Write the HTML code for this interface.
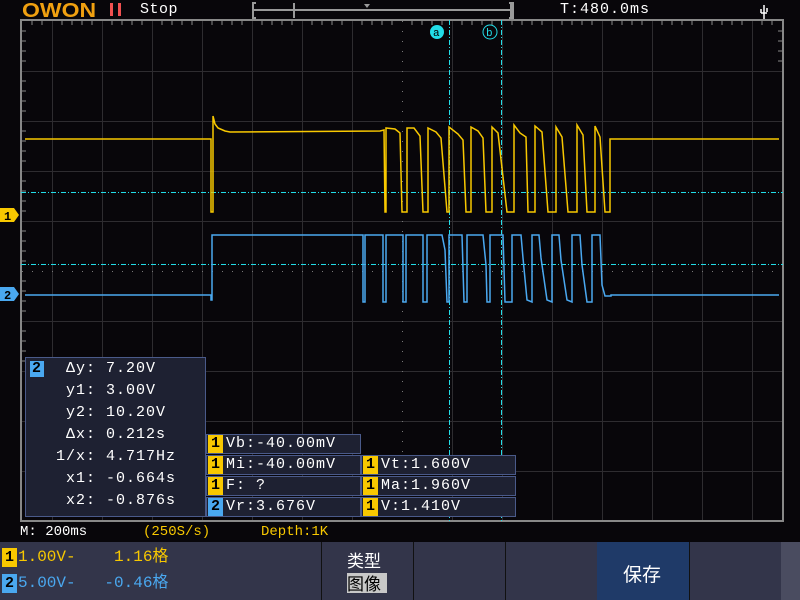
<!DOCTYPE html><html><head><meta charset="utf-8"><style>
*{margin:0;padding:0}body{width:800px;height:600px;background:#08060a;position:relative;overflow:hidden;font-family:"Liberation Mono","Noto Sans CJK SC",monospace;color:#fff}
.a{position:absolute;white-space:pre}
.b1{background:#f8c800;color:#000;display:inline-block;width:15px;text-align:center;font-weight:bold;margin-right:3px;letter-spacing:0}
.b2{background:#4aa8f0;color:#000;display:inline-block;width:15px;text-align:center;font-weight:bold;margin-right:3px;letter-spacing:0}
.mb{position:absolute;background:#1e2132;border:1px solid #4a5a8a;height:20px;font-size:15px;line-height:18px;box-sizing:border-box;padding-left:1px;letter-spacing:1px}
</style></head><body>
<svg class="a" style="left:0;top:0" width="800" height="600">
<g stroke="#2e2c30" stroke-width="1">
<path d="M52.5 20V521M102.5 20V521M152.5 20V521M202.5 20V521M252.5 20V521M302.5 20V521M352.5 20V521M452.5 20V521M502.5 20V521M552.5 20V521M602.5 20V521M652.5 20V521M702.5 20V521M752.5 20V521"/>
<path d="M21 71.5H783M21 121.5H783M21 171.5H783M21 221.5H783M21 321.5H783M21 371.5H783M21 421.5H783M21 471.5H783"/>
</g>
<g stroke="#777" stroke-width="1">
<path d="M402.5 20V521" stroke-dasharray="1,9" stroke-dashoffset="-1"/>
<path d="M21 271.5H783" stroke-dasharray="1,9" stroke-dashoffset="-1"/>
</g>
<g stroke="#888" stroke-width="2" fill="none"><rect x="21" y="20" width="762" height="501"/></g>
<g stroke="#888" stroke-width="1">
<path d="M32 20v5M42 20v5M62 20v5M72 20v5M82 20v5M92 20v5M112 20v5M122 20v5M132 20v5M142 20v5M162 20v5M172 20v5M182 20v5M192 20v5M212 20v5M222 20v5M232 20v5M242 20v5M262 20v5M272 20v5M282 20v5M292 20v5M312 20v5M322 20v5M332 20v5M342 20v5M362 20v5M372 20v5M382 20v5M392 20v5M412 20v5M422 20v5M432 20v5M442 20v5M462 20v5M472 20v5M482 20v5M492 20v5M512 20v5M522 20v5M532 20v5M542 20v5M562 20v5M572 20v5M582 20v5M592 20v5M612 20v5M622 20v5M632 20v5M642 20v5M662 20v5M672 20v5M682 20v5M692 20v5M712 20v5M722 20v5M732 20v5M742 20v5M762 20v5M772 20v5"/>
<path d="M21 31h5M21 41h5M21 51h5M21 61h5M21 81h5M21 91h5M21 101h5M21 111h5M21 131h5M21 141h5M21 151h5M21 161h5M21 181h5M21 191h5M21 201h5M21 211h5M21 231h5M21 241h5M21 251h5M21 261h5M21 281h5M21 291h5M21 301h5M21 311h5M21 331h5M21 341h5M21 351h5M21 361h5"/>
<path d="M778 31h5M778 41h5M778 51h5M778 61h5"/>
</g>
<g stroke="#22dde8" stroke-width="1" stroke-dasharray="5,2,1,2" fill="none">
<path d="M21 192.5H783M21 264.5H783M449.5 20V521M501.5 20V521"/>
</g>
<polyline fill="none" stroke="#f8c800" stroke-width="1.5" points="25,139 211,139 211,212 213,212 213,116 215,124 218,128 225,131 230,132 380,131 384,130 385,212 386,212 386,128 395,129 400,133 402,212 407,212 407,128 414,128 420,136 423,212 428,212 428,128 436,132 441,138 447,212 449,212 449,127 458,134 463,140 466,212 471,212 471,127 478,131 483,138 486,212 492,212 492,127 498,133 507,212 514,212 514,125 520,133 526,137 528,212 535,212 535,126 542,132 548,212 556,212 556,127 562,137 568,212 577,212 577,125 583,135 587,212 595,212 595,126 600,137 605,212 610,212 610,139 779,139"/>
<polyline fill="none" stroke="#4aa8f0" stroke-width="1.5" points="25,295 211,295 211,300 212,300 212,235 363,235 363,302 365,302 365,235 383,235 383,302 386,302 386,235 403,235 403,302 406,302 406,235 423,235 423,302 427,302 427,235 442,235 445,250 447,302 449,302 449,235 462,235 464,302 467,302 467,235 483,235 486,265 487,302 490,302 490,235 503,235 505,302 512,302 512,235 521,235 523,258 527,300 532,302 532,235 539,235 541,258 547,300 552,302 552,235 559,235 561,260 567,300 572,302 572,235 580,235 582,265 587,302 592,302 592,235 600,235 602,285 605,296 611,296 611,295 779,295"/>
<path d="M0 208h14l5 7-5 7H0z" fill="#f8c800"/>
<text x="4" y="220" font-size="12" font-family="Liberation Mono" font-weight="bold" fill="#000">1</text>
<path d="M0 287h14l5 7-5 7H0z" fill="#4aa8f0"/>
<text x="4" y="299" font-size="12" font-family="Liberation Mono" font-weight="bold" fill="#000">2</text>
<circle cx="437" cy="32" r="7" fill="#22dde8"/><text x="433" y="36" font-size="11" fill="#000" font-family="Liberation Mono">a</text>
<circle cx="490" cy="32" r="7" fill="none" stroke="#22dde8"/><text x="486" y="36" font-size="11" fill="#22dde8" font-family="Liberation Mono">b</text>
<path d="M256 3h-3v15h3M253 10h258M294 3v15M511 3v15h0M509 3h4v15h-4" stroke="#999" stroke-width="2" fill="none"/>
<path d="M364 4h6l-3 4z" fill="#999"/>
<path d="M764 5v14M761 9v4M767 8v4M761 13h6" stroke="#fff" stroke-width="1.5" fill="none"/>
</svg>
<div class="a" style="left:22px;top:0px;font:bold 20px 'Liberation Sans',sans-serif;color:#f0a010;letter-spacing:0px;transform:scaleX(1.15);transform-origin:left">OWON</div>
<div class="a" style="left:110px;top:3px;width:3px;height:13px;background:#f05050"></div>
<div class="a" style="left:118px;top:3px;width:3px;height:13px;background:#f05050"></div>
<div class="a" style="left:140px;top:1px;font-size:15px;letter-spacing:0.5px">Stop</div>
<div class="a" style="left:560px;top:1px;font-size:15px;letter-spacing:1px">T:480.0ms</div>
<div class="a" style="left:25px;top:357px;width:181px;height:160px;background:#1e2132;border:1px solid #4a5a8a;box-sizing:border-box;font-size:15px;line-height:22px;letter-spacing:1px">
<div class="a" style="left:4px;top:3px;width:14px;height:16px;background:#4aa8f0;color:#000;font-weight:bold;text-align:center;line-height:16px">2</div>
<div class="a" style="left:30px;top:0px"> Δy: 7.20V
 y1: 3.00V
 y2: 10.20V
 Δx: 0.212s
1/x: 4.717Hz
 x1: -0.664s
 x2: -0.876s</div></div>
<div class="mb" style="left:206px;top:434px;width:155px"><span class="b1">1</span>Vb:-40.00mV</div>
<div class="mb" style="left:206px;top:455px;width:155px"><span class="b1">1</span>Mi:-40.00mV</div>
<div class="mb" style="left:206px;top:476px;width:155px"><span class="b1">1</span>F:  ?</div>
<div class="mb" style="left:206px;top:497px;width:155px"><span class="b2">2</span>Vr:3.676V</div>
<div class="mb" style="left:361px;top:455px;width:155px"><span class="b1">1</span>Vt:1.600V</div>
<div class="mb" style="left:361px;top:476px;width:155px"><span class="b1">1</span>Ma:1.960V</div>
<div class="mb" style="left:361px;top:497px;width:155px"><span class="b1">1</span>V:1.410V</div>
<div class="a" style="left:20px;top:524px;font-size:14px">M: 200ms</div>
<div class="a" style="left:143px;top:524px;font-size:14px;color:#f8c800">(250S/s)</div>
<div class="a" style="left:261px;top:524px;font-size:14px;color:#f8c800">Depth:1K</div>
<div class="a" style="left:0;top:542px;width:800px;height:58px;background:#33354a"></div>
<div class="a" style="left:321px;top:542px;width:1px;height:58px;background:#111"></div>
<div class="a" style="left:413px;top:542px;width:1px;height:58px;background:#111"></div>
<div class="a" style="left:505px;top:542px;width:1px;height:58px;background:#111"></div>
<div class="a" style="left:597px;top:542px;width:92px;height:58px;background:#1f3a68"></div>
<div class="a" style="left:689px;top:542px;width:1px;height:58px;background:#111"></div>
<div class="a" style="left:781px;top:542px;width:19px;height:58px;background:#4a4c60"></div>
<div class="a" style="left:2px;top:548px;width:15px;height:19px;background:#f8c800;color:#000;font-weight:bold;font-size:15px;text-align:center;line-height:19px">1</div>
<div class="a" style="left:18px;top:548px;font-size:16px;color:#f8c800;line-height:19px">1.00V-    1.16格</div>
<div class="a" style="left:2px;top:574px;width:15px;height:19px;background:#4aa8f0;color:#000;font-weight:bold;font-size:15px;text-align:center;line-height:19px">2</div>
<div class="a" style="left:18px;top:574px;font-size:16px;color:#4aa8f0;line-height:19px">5.00V-   -0.46格</div>
<div class="a" style="left:347px;top:547px;font-size:17px;font-family:'Noto Sans CJK SC',sans-serif">类型</div>
<div class="a" style="left:347px;top:573px;width:40px;height:20px;background:#c8c8c8;color:#000;font-size:17px;line-height:20px;font-family:'Noto Sans CJK SC',sans-serif">图像</div>
<div class="a" style="left:623px;top:560px;font-size:19px;font-family:'Noto Sans CJK SC',sans-serif">保存</div>
</body></html>
